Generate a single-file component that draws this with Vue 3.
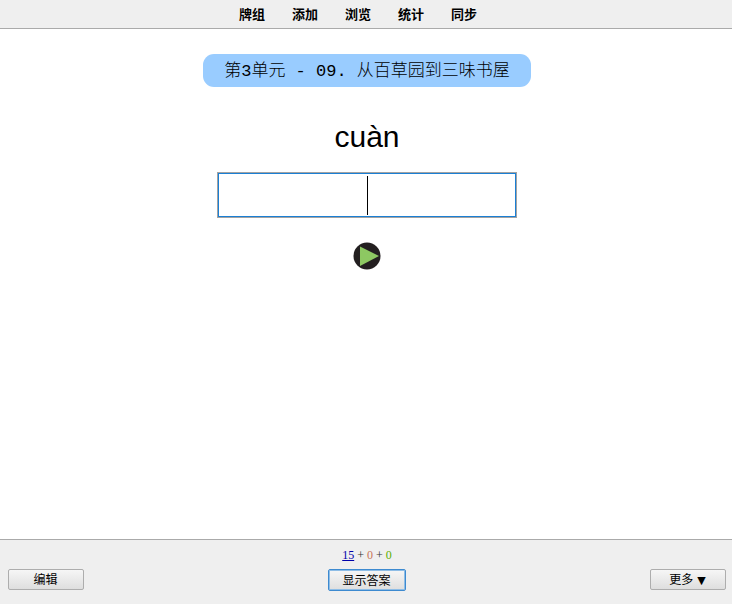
<script setup>
const tabs = ['牌组', '添加', '浏览', '统计', '同步']
</script>

<template>
  <div class="page">
    <header class="top">
      <a v-for="t in tabs" :key="t" class="tab">{{ t }}</a>
    </header>
    <main class="main">
      <div class="pill">第3单元 - 09. 从百草园到三味书屋</div>
      <div class="pinyin">cuàn</div>
      <div class="box"><span class="caret"></span></div>
      <svg class="play" width="28" height="28" viewBox="0 0 28 28">
        <circle cx="14" cy="14" r="13.5" fill="#231f20" />
        <path d="M7 4.5 L26 14 L7 24 Z" fill="#8dc862" />
      </svg>
    </main>
    <footer class="bottom">
      <div class="stats"><span class="new">15</span> + <span class="lrn">0</span> + <span class="due">0</span></div>
      <div class="row">
        <button class="btn">编辑</button>
        <button class="btn focus">显示答案</button>
        <button class="btn">更多<span class="arrow">▼</span></button>
      </div>
    </footer>
  </div>
</template>

<style>
html, body { margin: 0; background: #fff; }
</style>

<style scoped>
.page {
  width: 732px;
  height: 604px;
  display: flex;
  flex-direction: column;
  overflow: hidden;
  font-family: "Liberation Sans", "Noto Sans CJK SC", sans-serif;
  color: #000;
}
.top {
  height: 28px;
  background: #efefef;
  border-bottom: 1px solid #aaa;
  display: flex;
  justify-content: center;
  align-items: center;
  gap: 27px;
  padding-right: 16px;
  font-size: 13px;
  font-weight: 700;
}
.tab { color: #000; width: 26px; text-align: center; margin-bottom: 2px; }
.main {
  flex: 1;
  display: flex;
  flex-direction: column;
  align-items: center;
  padding-left: 2px;
}
.pill {
  margin-top: 25px;
  width: 328px;
  height: 33px;
  box-sizing: border-box;
  background: #99ccff;
  border-radius: 11px;
  text-align: center;
  line-height: 35px;
  font-size: 17px;
  font-family: "Liberation Mono", "Noto Sans CJK SC", monospace;
  font-weight: 300;
}
.pinyin {
  margin-top: 31px;
  font-size: 30px;
  line-height: 38px;
  height: 38px;
}
.box {
  margin-top: 16px;
  width: 300px;
  height: 46px;
  box-sizing: border-box;
  border: 1px solid #a3a3a3;
  box-shadow: inset 0 0 0 1px #1a7fd4;
  display: flex;
  justify-content: center;
  align-items: center;
}
.caret { width: 1px; height: 39px; background: #000; }
.play { margin-top: 24px; display: block; }
.bottom {
  height: 64px;
  background: #efefef;
  border-top: 1px solid #aaa;
  display: flex;
  flex-direction: column;
}
.stats {
  margin-top: 7px;
  padding-left: 2px;
  height: 16px;
  line-height: 16px;
  text-align: center;
  font-family: "Liberation Serif", serif;
  font-size: 12px;
  color: #333;
}
.new { color: #00a; text-decoration: underline; }
.lrn { color: #c9765a; }
.due { color: #5cb000; }
.row {
  margin-top: 6px;
  padding: 0 6px 0 8px;
  display: flex;
  justify-content: space-between;
  align-items: flex-start;
}
.btn {
  width: 76px;
  height: 21px;
  padding: 0 1px 2px 0;
  border: 1px solid #adadad;
  border-radius: 2px;
  background: linear-gradient(#f6f6f6, #dedede);
  font-family: "Noto Sans CJK SC", sans-serif;
  font-size: 12px;
  line-height: 17px;
  color: #000;
}
.focus {
  width: 78px;
  height: 22px;
  border: 1px solid #3d8ad0;
  box-shadow: inset 0 0 0 1px #8ebde6;
}
.arrow {
  margin-left: 4px;
  font-family: "DejaVu Sans", sans-serif;
  font-size: 11px;
}
</style>
